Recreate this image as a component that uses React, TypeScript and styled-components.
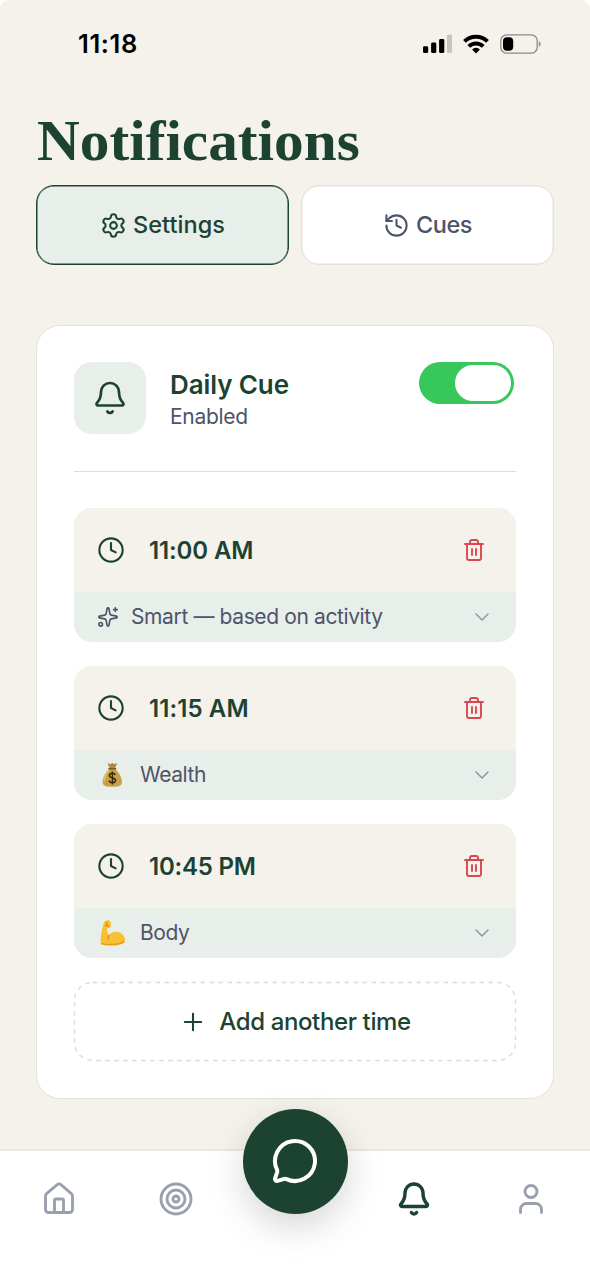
import React from "react";
import styled, { createGlobalStyle } from "styled-components";
import {
  Bell,
  ChevronDown,
  Clock,
  History,
  House,
  MessageCircle,
  Plus,
  Settings,
  Sparkles,
  Target,
  Trash2,
  User,
} from "lucide-react";

const green = "#1c4332";
const slate = "#4e5468";
const sand = "#f5f1eb";
const mint = "#e8eeea";
const line = "#e6e2da";

const GlobalStyle = createGlobalStyle`
  *, *::before, *::after { box-sizing: border-box; }
  body {
    margin: 0;
    background: #fff;
    font-family: Inter, "Liberation Sans", sans-serif;
    color: ${green};
  }
  button { font: inherit; color: inherit; border: 0; background: none; padding: 0; }
  svg { display: block; flex: none; }
`;

const Screen = styled.div`
  height: 1280px;
  display: flex;
  flex-direction: column;
  background: ${sand};
  border-radius: 9px 9px 0 0;
  overflow: hidden;
`;

const StatusBar = styled.header`
  height: 88px;
  flex: none;
  display: flex;
  align-items: center;
  justify-content: space-between;
  padding: 0 48px 0 78px;
  color: #000;
`;

const StatusIcons = styled.div`
  display: flex;
  align-items: center;
  gap: 11px;
`;

const Main = styled.main`
  flex: 1;
  padding: 20px 36px 0;
`;

const Title = styled.h1`
  margin: 0 0 0 1px;
  height: 77px;
  font: 700 57px/66px "Liberation Serif", serif;
  width: max-content;
  transform: scaleX(1.04);
  transform-origin: left;
`;

const Text = styled.span<{ $size: number; $weight?: number; $track?: number; $color?: string }>`
  font-size: ${(p) => p.$size}px;
  font-weight: ${(p) => p.$weight ?? 400};
  letter-spacing: ${(p) => p.$track ?? 0}px;
  color: ${(p) => p.$color ?? "inherit"};
  line-height: 1.25;
  white-space: nowrap;
`;

const Tabs = styled.div`
  display: grid;
  grid-template-columns: 1fr 1fr;
  gap: 12px;
`;

const Tab = styled.button<{ $active?: boolean }>`
  height: 80px;
  display: flex;
  align-items: center;
  justify-content: center;
  gap: 6px;
  border: 1px solid ${(p) => (p.$active ? green : line)};
  box-shadow: inset 0 0 0 0.5px ${(p) => (p.$active ? green : line)};
  border-radius: 18px;
  background: ${(p) => (p.$active ? mint : "#fff")};
  color: ${(p) => (p.$active ? green : slate)};
`;

const Card = styled.section`
  margin-top: 60px;
  height: 774px;
  padding: 36px 37px 0;
  border: 1px solid ${line};
  border-radius: 24px;
  background: #fff;
  display: flex;
  flex-direction: column;
  gap: 24px;
`;

const CardHead = styled.div`
  display: flex;
  align-items: flex-start;
  height: 110px;
  margin-bottom: 12px;
  border-bottom: 1px solid #dcdcda;
`;

const IconTile = styled.div`
  width: 72px;
  height: 72px;
  border-radius: 18px;
  background: ${mint};
  display: grid;
  place-items: center;
`;

const HeadText = styled.div`
  flex: 1;
  display: flex;
  flex-direction: column;
  gap: 2px;
  padding: 7px 0 0 24px;
`;

const Switch = styled.button`
  width: 95px;
  height: 42px;
  margin-right: 2.5px;
  padding: 3px;
  border-radius: 21px;
  background: #37c75b;
  display: flex;
  justify-content: flex-end;
`;

const Thumb = styled.span`
  width: 56px;
  height: 36px;
  border-radius: 18px;
  background: #fff;
`;

const Item = styled.div`
  height: 134px;
  flex: none;
  border-radius: 18px;
  overflow: hidden;
  background: ${mint};
`;

const TimeRow = styled.div`
  height: 84px;
  display: flex;
  align-items: center;
  gap: 24px;
  padding: 1px 30px 0 23px;
  background: ${sand};

  > svg { margin-top: -1px; }
  > :last-child { margin-left: auto; }
`;

const TopicRow = styled.div<{ $gap: number }>`
  height: 50px;
  display: flex;
  align-items: center;
  gap: ${(p) => p.$gap}px;
  padding: 1px 22px 0 23px;
  color: ${slate};

  > svg { margin-top: -1px; }
  > :last-child { margin-left: auto; }
`;

const AddButton = styled.button`
  position: relative;
  height: 79px;
  flex: none;
  display: flex;
  align-items: center;
  justify-content: center;
  gap: 12px;
`;

const DashedOutline = styled.svg`
  position: absolute;
  inset: 0;
  width: 100%;
  height: 100%;
  overflow: visible;
`;

const Nav = styled.nav`
  position: relative;
  height: 131px;
  flex: none;
  padding-top: 29.5px;
  display: grid;
  grid-template-columns: 117.5fr 117.5fr 120fr 118fr 117fr;
  justify-items: center;
  align-items: start;
  background: #fff;
  border-top: 2px solid #ebe7e0;
  color: #9a9fae;

  > svg:last-of-type { margin-right: 1px; }
`;

const Fab = styled.button`
  position: absolute;
  left: calc(50% - 52.5px);
  top: -42.5px;
  width: 105px;
  height: 105px;
  border-radius: 50%;
  background: ${green};
  color: #fff;
  display: grid;
  place-items: center;
  box-shadow: 0 12px 36px rgba(0, 0, 0, 0.17);
`;

const SignalIcon = () => (
  <svg width="29" height="20" viewBox="0 0 29 20">
    <rect x="0" y="12.3" width="5.2" height="6.8" rx="1.4" />
    <rect x="8.1" y="8.6" width="5.2" height="10.5" rx="1.4" />
    <rect x="16.1" y="4.9" width="5.2" height="14.2" rx="1.4" />
    <rect x="24" y="0.6" width="5" height="18.5" rx="1.4" fill="#c8c5c0" />
  </svg>
);

const WifiIcon = () => (
  <svg width="26" height="20" viewBox="0 0 26 20" fill="none" stroke="#000" strokeWidth="4">
    <path d="M1.5 7.4a16.4 16.4 0 0 1 23 0" />
    <path d="M5.8 12.4a10.2 10.2 0 0 1 14.4 0" />
    <path d="M13 19.6l-3.9-4.200a5.400 5.400 0 0 1 7.800 0z" fill="#000" stroke="none" />
  </svg>
);

const BatteryIcon = () => (
  <svg width="42" height="20" viewBox="0 0 42 20">
    <rect x="0.8" y="0.8" width="36.4" height="18.4" rx="6" fill="none" stroke="#8e8c88" strokeWidth="1.3" />
    <rect x="3" y="3.2" width="10.2" height="13.6" rx="4" />
    <path d="M38.8 7.2c2.4 1 2.4 4.6 0 5.6z" fill="#8e8c88" />
  </svg>
);

const MoneyBag = () => (
  <svg width="30" height="28" viewBox="0 0 30 28">
    <path d="M10.5 1.8l3 1.5 1.8-1.6 1.9 1.6 3-1.4-2.3 6h-5z" fill="#b08a3a" />
    <path d="M12.4 8h5.8c4 3.5 6.8 8.5 6.7 13.3-.1 3.3-2 4.5-9.6 4.5s-9.5-1.2-9.6-4.5C5.6 16.5 8.4 11.5 12.4 8z" fill="#c9a048" />
    <path d="M12.5 8.8c-3 3-5 7.2-5.2 11" fill="none" stroke="#e3c06a" strokeWidth="1.6" />
    <path d="M12 7.8h6.6" stroke="#7a5a20" strokeWidth="1.6" strokeLinecap="round" />
    <path d="M18.4 14c-.5-1.3-1.6-1.8-3-1.8-1.7 0-3 .8-3 2.3 0 3.3 6.2 1.6 6.2 4.8 0 1.6-1.4 2.4-3.2 2.4-1.7 0-2.9-.7-3.3-2.2M15.4 10.6v12.8" fill="none" stroke="#33280f" strokeWidth="1.4" />
  </svg>
);

const FlexedArm = () => (
  <svg width="30" height="28" viewBox="0 0 30 28">
    <path
      d="M7.3 2.8C8.6 1.2 11.7.7 13 2c1.3 1.2 1.3 5.2.1 6.4-.8.8-2.3.7-2.9 1.1-.4 2.5.3 5 1.8 6.9 2.3-3.6 7.4-4.8 11.2-2.6 3.6 2 5.6 5.6 4.7 8.1-1.3 3.3-6.7 4.7-13 4.7-5 0-9.2-.5-10.6-1.7C2.7 21.5 4.9 8.6 7.3 2.8z"
      fill="#fbc02f"
    />
    <path d="M4.1 24.4c4 1.6 18.4 2.2 23.2-2" fill="none" stroke="#e89a1c" strokeWidth="1.5" />
    <path d="M12 16.4c-.8 1.3-1.1 2.5-.9 4M8.2 6.8c1.2-.8 2.5-.6 3.6.6M9.5 3.4l.5 2.2" fill="none" stroke="#dc8b17" strokeWidth="1.2" strokeLinecap="round" />
  </svg>
);

type Cue = { time: string; timeTrack: number; topic: string; topicTrack: number; icon: React.ReactNode; gap: number };

const cues: Cue[] = [
  {
    time: "11:00 AM",
    timeTrack: -0.12,
    topic: "Smart — based on activity",
    topicTrack: -0.38,
    icon: <Sparkles size={22} strokeWidth={1.8} />,
    gap: 12,
  },
  { time: "11:15 AM", timeTrack: 0.1, topic: "Wealth", topicTrack: -0.45, icon: <MoneyBag />, gap: 13 },
  { time: "10:45 PM", timeTrack: -0.2, topic: "Body", topicTrack: -0.45, icon: <FlexedArm />, gap: 13 },
];

export default function App() {
  return (
    <Screen>
      <GlobalStyle />
      <StatusBar>
        <Text $size={25.5} $weight={600} $track={0.6}>11:18</Text>
        <StatusIcons>
          <SignalIcon />
          <WifiIcon />
          <BatteryIcon />
        </StatusIcons>
      </StatusBar>

      <Main>
        <Title>Notifications</Title>
        <Tabs>
          <Tab $active>
            <Settings size={27} strokeWidth={1.8} />
            <Text $size={23.5} $weight={500} $track={0.05}>Settings</Text>
          </Tab>
          <Tab>
            <History size={27} strokeWidth={1.8} />
            <Text $size={23.5} $weight={500} $track={-0.4}>Cues</Text>
          </Tab>
        </Tabs>

        <Card>
          <CardHead>
            <IconTile>
              <Bell size={36} strokeWidth={1.8} />
            </IconTile>
            <HeadText>
              <Text $size={26} $weight={600} $track={-0.1}>Daily Cue</Text>
              <Text $size={21} $track={-0.3} $color={slate}>Enabled</Text>
            </HeadText>
            <Switch role="switch" aria-checked="true" aria-label="Daily Cue">
              <Thumb />
            </Switch>
          </CardHead>

          {cues.map((cue) => (
            <Item key={cue.time}>
              <TimeRow>
                <Clock size={28} strokeWidth={1.8} />
                <Text $size={24} $weight={600} $track={cue.timeTrack}>{cue.time}</Text>
                <Trash2 size={24} strokeWidth={1.9} color="#d9484c" />
              </TimeRow>
              <TopicRow $gap={cue.gap}>
                {cue.icon}
                <Text $size={21} $track={cue.topicTrack}>{cue.topic}</Text>
                <ChevronDown size={24} strokeWidth={1.4} color="#8b929c" />
              </TopicRow>
            </Item>
          ))}

          <AddButton>
            <DashedOutline viewBox="0 0 442 79" fill="none">
              <rect x="0.5" y="0.5" width="441" height="78" rx="18" stroke="#dadad8" strokeWidth="1.3" strokeDasharray="4.5 4.5" />
            </DashedOutline>
            <Plus size={28} strokeWidth={1.8} />
            <Text $size={24} $weight={500} $track={-0.38}>Add another time</Text>
          </AddButton>
        </Card>
      </Main>

      <Nav>
        <House size={36} strokeWidth={1.9} />
        <Target size={36} strokeWidth={1.9} />
        <span />
        <Bell size={36} strokeWidth={2.3} color={green} />
        <User size={36} strokeWidth={1.9} />
        <Fab aria-label="Chat">
          <MessageCircle size={48} />
        </Fab>
      </Nav>
    </Screen>
  );
}
